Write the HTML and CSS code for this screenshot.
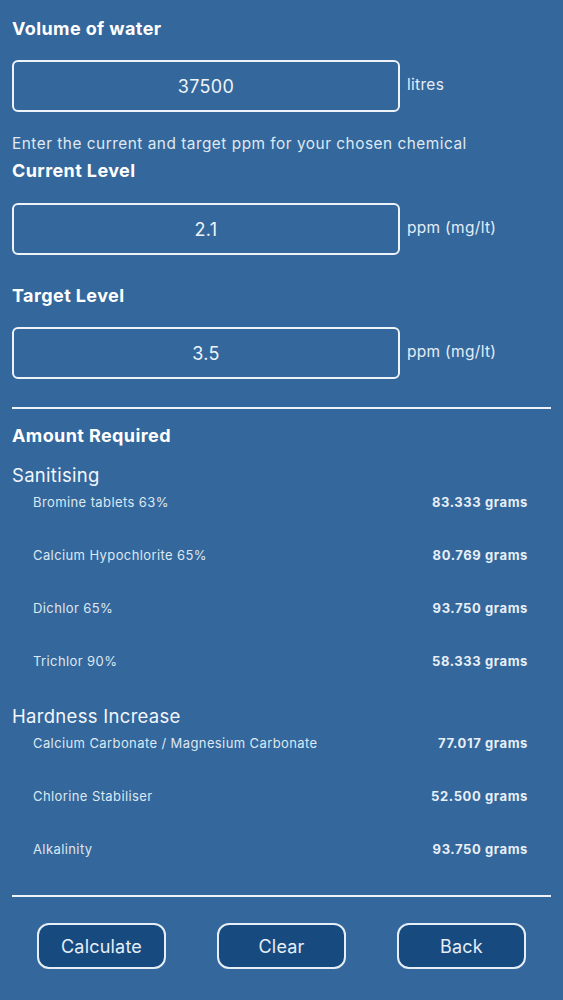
FILE: index.html
```html
<!DOCTYPE html>
<html lang="en">
<head>
<meta charset="utf-8">
<title>Chemical Calculator</title>
<link rel="stylesheet" href="styles.css">
</head>
<body>
<main class="page">
  <h2 class="label label-first">Volume of water</h2>
  <div class="field-row">
    <input class="field" type="text" value="37500" readonly>
    <span class="unit">litres</span>
  </div>

  <p class="hint">Enter the current and target ppm for your chosen chemical</p>
  <h2 class="label label-current">Current Level</h2>
  <div class="field-row">
    <input class="field" type="text" value="2.1" readonly>
    <span class="unit">ppm (mg/lt)</span>
  </div>

  <h2 class="label label-target">Target Level</h2>
  <div class="field-row">
    <input class="field" type="text" value="3.5" readonly>
    <span class="unit">ppm (mg/lt)</span>
  </div>

  <hr class="rule rule-top">

  <h2 class="label label-amount">Amount Required</h2>

  <h3 class="group">Sanitising</h3>
  <ul class="results">
    <li class="result"><span class="name">Bromine tablets 63%</span><span class="value">83.333 grams</span></li>
    <li class="result"><span class="name">Calcium Hypochlorite 65%</span><span class="value">80.769 grams</span></li>
    <li class="result"><span class="name">Dichlor 65%</span><span class="value">93.750 grams</span></li>
    <li class="result"><span class="name">Trichlor 90%</span><span class="value">58.333 grams</span></li>
  </ul>

  <h3 class="group">Hardness Increase</h3>
  <ul class="results">
    <li class="result"><span class="name">Calcium Carbonate / Magnesium Carbonate</span><span class="value">77.017 grams</span></li>
    <li class="result"><span class="name">Chlorine Stabiliser</span><span class="value">52.500 grams</span></li>
    <li class="result"><span class="name">Alkalinity</span><span class="value">93.750 grams</span></li>
  </ul>

  <hr class="rule rule-bottom">

  <div class="actions">
    <button class="btn" type="button">Calculate</button>
    <button class="btn" type="button">Clear</button>
    <button class="btn" type="button">Back</button>
  </div>
</main>
</body>
</html>
```

FILE: styles.css
```css
* {
  box-sizing: border-box;
}

html, body {
  margin: 0;
  padding: 0;
  background: #34679b;
}

body {
  font-family: Inter, "Noto Sans", "Liberation Sans", sans-serif;
  color: #ffffff;
  width: 563px;
  height: 1000px;
  overflow: hidden;
}

.page {
  display: flex;
  flex-direction: column;
  padding: 18px 12px 0 12px;
}

.label {
  margin: 0;
  font-size: 18px;
  line-height: 22px;
  font-weight: 700;
  color: #ffffff;
  letter-spacing: 0.4px;
}

.label-current { margin-top: 6px; }
.label-target { margin-top: 30px; }
.label-amount { margin-top: 16px; }

.field-row {
  display: flex;
  align-items: center;
  margin-top: 20px;
}

.label-current + .field-row { margin-top: 21px; }
.label-target + .field-row { margin-top: 20px; }

.field {
  width: 388px;
  height: 52px;
  margin: 0;
  padding: 0;
  border: 2.5px solid #eef3f9;
  border-radius: 6px;
  background: transparent;
  color: #eef3f9;
  font-family: Inter, "Noto Sans", "Liberation Sans", sans-serif;
  font-size: 18px;
  letter-spacing: 0.3px;
  text-align: center;
  outline: none;
}

.unit {
  margin-left: 7px;
  margin-top: -3px;
  font-size: 15.5px;
  letter-spacing: 0.3px;
  color: #e3edf7;
}

.hint {
  margin: 22px 0 0 0;
  font-size: 15.4px;
  line-height: 20px;
  letter-spacing: 0.5px;
  color: #dfe9f4;
}

.rule {
  border: 0;
  height: 2px;
  background: #eef3f9;
  margin: 0;
  width: 539px;
}

.rule-top { margin-top: 28px; }
.rule-bottom { margin-top: 1px; }

.group {
  margin: 16px 0 0 0;
  font-size: 18.5px;
  line-height: 24px;
  font-weight: 400;
  letter-spacing: 0.3px;
  color: #f2f6fb;
}

.results + .group { margin-top: -2px; }

.group + .results { margin-top: 7px; }

.results {
  list-style: none;
  margin: 0;
  padding: 0 23px 0 21px;
}

.result {
  display: flex;
  justify-content: space-between;
  height: 53px;
  font-size: 13px;
  line-height: 17px;
  letter-spacing: 0.4px;
  color: #dde8f3;
}

.value {
  font-weight: 700;
  letter-spacing: 0.6px;
  color: #e8eff7;
}

.actions {
  display: flex;
  justify-content: space-between;
  padding: 0 25px;
  margin-top: 26px;
}

.btn {
  width: 129px;
  height: 46px;
  border: 2px solid #e6eef7;
  border-radius: 12px;
  background: #174b80;
  color: #e6eef7;
  font-family: Inter, "Noto Sans", "Liberation Sans", sans-serif;
  font-size: 18px;
  letter-spacing: 0.2px;
  padding: 0;
}
```
